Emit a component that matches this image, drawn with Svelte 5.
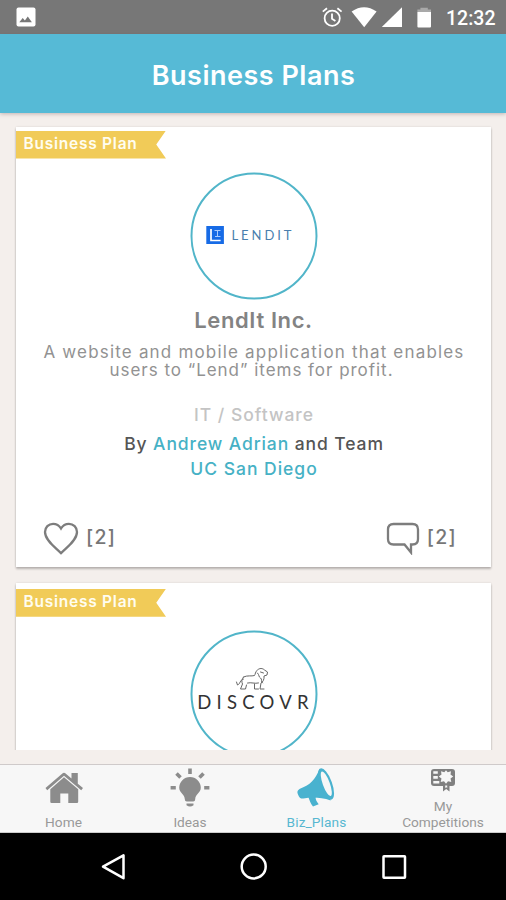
<script>
  const plans = [
    {
      logo: 'lendit',
      name: 'LendIt Inc.',
      lines: ['A website and mobile application that enables', 'users to “Lend” items for profit.'],
      field: 'IT / Software',
      author: 'Andrew Adrian',
      school: 'UC San Diego',
      likes: 2,
      comments: 2
    },
    { logo: 'discovr' }
  ];
</script>

<div class="screen">
  <div class="status">
    <svg class="photo" width="20" height="20" viewBox="0 0 20 20">
      <rect x=".5" y=".5" width="19" height="19" rx="2" fill="#fff" />
      <path d="M3.3 15.3L6.7 11l2.2 2.4 2.9-3.9 4.1 5.8z" fill="#777" />
    </svg>
    <svg width="186" height="34" viewBox="320 0 186 34">
      <g fill="none" stroke="#fff" stroke-width="1.8">
        <circle cx="332.2" cy="18.3" r="7.6" />
        <path d="M332 13.6v5.2l3.4 2.2M322.8 11.6l4.2-3.4M341.6 11.6l-4.2-3.4" />
      </g>
      <path d="M351.6 11.6Q364 2.8 376.6 11.6L364.2 27.2z" fill="#fff" />
      <path d="M402 7.3V27h-20.2z" fill="#fff" />
      <path d="M417.4 12V9.6h3V7.7h7.4v1.9h3.2V12z" fill="#a9a9a9" />
      <path d="M417.4 12H431v14.6q0 1-1 1h-11.600q-1 0-1-1z" fill="#fff" />
      <text class="clock" x="446" y="25" textLength="49.500">12:32</text>
    </svg>
  </div>
  <header><h1>Business Plans</h1></header>

  <main>
    <div class="feed">
      {#each plans as plan}
        <article class={plan.logo}>
          <div class="ribbon"><span>Business Plan</span></div>
          <div class="avatar">
            {#if plan.logo === 'lendit'}
              <svg width="128" height="128" viewBox="0 0 128 128">
                <circle cx="64" cy="64" r="62.500" class="ring" />
                <rect x="16.300" y="54" width="17.600" height="18" fill="#176be6" />
                <path d="M21 57v11.500h9.600" fill="none" stroke="#fff" stroke-width="1.700" />
                <path d="M24.500 58.500h6M27.500 58.500v6M25 64.500h5.500" fill="none" stroke="#a9cbff" stroke-width="1" />
                <text x="41.500" y="68" class="lendtext" textLength="60">LENDIT</text>
              </svg>
            {:else}
              <svg width="128" height="128" viewBox="0 0 128 128">
                <circle cx="64" cy="64" r="62.500" class="ring" />
                <g transform="translate(.5 1)" fill="none" stroke="#666" stroke-width="1" stroke-linejoin="round" stroke-linecap="round">
                  <path d="M53 46c4-2 8-.5 11-1.500 1-1 .5-4 3-5.500 2-2 5-2 7 0l3 2-.500 3-3 1c.5 3-1 6-3 7l-1 6h4M53 46c-2 2-2 5-1 7l-2 5h5l1-4M64 53v5h4M57 52c4-1 7 1 11 0M67 42c2 2 1 4 3 5s0 4 2 5M70 41l3 1M53 48c-4 1-3 5-6 6l-1-3" />
                </g>
                <text x="7.200" y="78.500" class="disctext" textLength="111.500">DISCOVR</text>
              </svg>
            {/if}
          </div>
          {#if plan.name}
            <h2>{plan.name}</h2>
            <p class="desc">
              <span class="l1">{plan.lines[0]}</span>
              <span class="l2">{plan.lines[1]}</span>
            </p>
            <p class="field">{plan.field}</p>
            <p class="by">By <b>{plan.author}</b> and Team</p>
            <p class="school">{plan.school}</p>
            <div class="actions">
              <div class="act">
                <svg width="36" height="33" viewBox="0 0 36 33">
                  <path d="M18 31.200C13 26 2 18.500 2 10 2 5.300 5.600 1.800 10.100 1.800c3.200 0 6.100 1.700 7.900 4.700 1.800-3 4.700-4.700 7.900-4.700C30.400 1.800 34 5.300 34 10c0 8.500-11 16-16 21.200z" />
                </svg>
                <span>[{plan.likes}]</span>
              </div>
              <div class="act">
                <svg width="34" height="33" viewBox="0 0 34 33">
                  <path d="M7.500 2h19q5.500 0 5.500 5.500v9.500q0 5.500-5.500 5.500H25v8l-6.500-8h-11Q2 22.500 2 17V7.500Q2 2 7.500 2z" />
                </svg>
                <span>[{plan.comments}]</span>
              </div>
            </div>
          {/if}
        </article>
      {/each}
    </div>
  </main>

  <nav class="tabs">
    <div class="tab">
      <svg width="40" height="42" viewBox="0 0 40 42" fill="#8c8c8c">
        <path d="M20 12.200l14.200 12v12.600q0 1.200-1.200 1.200h-8.700v-9.500h-8V38H7.500q-1.200 0-1.200-1.200V24.200z" />
        <path d="M1.500 23L18.400 8.400q1.600-1.400 3.200 0l5.900 5V8.100h6.300v10.700L39 23l-1.800 2.200L20 10.800 3.200 25.200z" />
      </svg>
      <span>Home</span>
    </div>
    <div class="tab">
      <svg width="40" height="42" viewBox="0 0 40 42" fill="#8c8c8c">
        <path d="M20 12a10.800 10.800 0 0 1 10.800 10.800c0 4.800-5.600 6.700-5.600 11.400q0 2.300-2 2.300h-6.400q-2 0-2-2.300c0-4.700-5.600-6.600-5.600-11.400A10.800 10.800 0 0 1 20 12z" />
        <path d="M16.500 38.500h7v1.700q-3.500 2.600-7 0z" />
        <path d="M20 3.500v5.500M6.500 8.500l4 4M33.500 8.500l-4 4M.6 22.800h5.200M34.200 22.800h5.200" stroke="#8c8c8c" stroke-width="3.600" />
      </svg>
      <span>Ideas</span>
    </div>
    <div class="tab active">
      <svg width="40" height="42" viewBox="0 0 40 42" fill="#49b2cf">
        <path d="M22.800 3.500C18 15 13 20 3.500 23.500.5 25 0 26.500.800 29l1 2.200c1 2 2.500 2.600 4.700 2.200 9-1.600 17.500-1 27.200 2z" />
        <ellipse cx="29" cy="19" rx="6.100" ry="16.500" transform="rotate(-20 29 19)" />
        <ellipse cx="29.300" cy="18.700" rx="3.500" ry="13" transform="rotate(-20 29.300 18.700)" fill="#f7f7f7" />
        <path d="M11 31h7.700c-.5 3.500 1 5.500 3 8.200l-5.700 2.300c-2.500-3-3.500-6.500-5-10.500z" />
      </svg>
      <span class="biz">Biz_Plans</span>
    </div>
    <div class="tab comps">
      <svg width="26" height="26" viewBox="0 0 26 26">
        <rect x="1" y="2" width="24" height="17" rx="3" fill="#808080" />
        <path d="M3.300 4.300h4.500v2.400H3.300zM3.300 9h4.500v2.700H3.300zM3.300 14h6v2.600h-6z" fill="#f7f7f7" />
        <path d="M16 3.200l1.700 2.100 3.300-1.100-.5 3.200 2.700 2.100-2.700 1.900.8 3.500-3.300-.7-2 2.500-2-2.500-3.300.7.800-3.500-2.700-1.900 2.700-2.100-.5-3.200 3.300 1.100z" fill="#f7f7f7" />
        <path d="M13 16.500l3 1.500 3.500-1.500v8L16.200 22 13 24.500z" fill="#808080" />
        <path d="M15.200 18.500h2v2.600l-1-.8-1 .8z" fill="#f7f7f7" />
      </svg>
      <span>My</span>
      <span>Competitions</span>
    </div>
  </nav>

  <div class="sysnav">
    <svg width="506" height="67" viewBox="0 0 506 67" fill="none" stroke="#fff" stroke-width="2.500" stroke-linejoin="round">
      <path d="M123.500 22.300v22.900L103 33.700z" />
      <circle cx="253.700" cy="33.500" r="12" />
      <rect x="383.500" y="23.300" width="21.500" height="21.500" rx=".5" />
    </svg>
  </div>
</div>

<style>
  :global(body) { margin: 0; }
  .screen {
    width: 506px; height: 900px; overflow: hidden;
    display: flex; flex-direction: column;
    background: #f4efec; font-family: Inter, "Open Sans", sans-serif;
  }
  svg { display: block; flex: none; }
  h1, h2, p { margin: 0; white-space: nowrap; }
  .status {
    height: 34px; flex: none; background: #777;
    display: flex; align-items: center; justify-content: space-between;
  }
  .photo { margin-left: 16px; }
  .clock { font: 500 19.500px Roboto, sans-serif; fill: #fff; }
  header {
    height: 79px; flex: none; background: #56bad6; position: relative;
    box-shadow: 0 1px 4px rgba(120, 90, 90, .4);
    display: flex; justify-content: center;
  }
  h1 { font-size: 27px; font-weight: 600; line-height: 32px; margin: 26px 0 0 1px; letter-spacing: .5px; color: #fff; }
  main { height: 637px; flex: none; overflow: hidden; }
  .feed { padding: 14px 15px 0 16px; display: flex; flex-direction: column; gap: 15.500px; }
  article {
    height: 440px; flex: none; background: #fff; box-sizing: border-box; padding-top: 3.500px;
    box-shadow: 0 2px 2px rgba(100, 95, 95, .4), 0 0 2px rgba(0, 0, 0, .12);
    display: flex; flex-direction: column; align-items: center;
  }
  article.discovr { padding-top: 6.200px; }
  .ribbon {
    align-self: flex-start; width: 150px; height: 28px; background: #f1cb58;
    clip-path: polygon(0 0, 100% 0, 93.500% 50%, 100% 100%, 0 100%);
  }
  .ribbon span {
    display: block; padding-left: 7.500px; font-size: 15.500px; font-weight: 600;
    line-height: 26px; letter-spacing: .750px; color: #fffdf0; white-space: nowrap;
  }
  .avatar { margin-top: 13.500px; }
  .ring { fill: #fff; stroke: #51b5c9; stroke-width: 2; }
  .lendtext { font: 400 13px Lato, sans-serif; fill: #4a7fae; }
  .disctext { font: 400 18.500px Lato, sans-serif; fill: #333; }
  h2 { font-size: 22px; font-weight: 600; line-height: 26px; margin-top: 7px; color: #838383; letter-spacing: .6px; }
  .desc { display: flex; flex-direction: column; align-items: center; margin-top: 10px; font-size: 17px; line-height: 18.300px; color: #929292; }
  .l1 { letter-spacing: 1.180px; margin-left: 1px; }
  .l2 { letter-spacing: .970px; margin-right: 4px; }
  .field { margin-top: 25px; font-size: 17.500px; font-weight: 500; line-height: 20px; color: #c4c4c4; letter-spacing: .980px; margin-left: 1px; }
  .by { margin-top: 9px; font-size: 17.500px; font-weight: 500; line-height: 20px; color: #555; letter-spacing: .900px; margin-left: 1px; }
  b { font-weight: 500; color: #46b1c5; }
  .school { margin-top: 5px; font-size: 17.500px; font-weight: 500; line-height: 20px; color: #46b1c5; letter-spacing: .980px; margin-left: 1px; }
  .actions { margin-top: 43px; align-self: stretch; padding: 0 34px 0 27px; display: flex; justify-content: space-between; }
  .act { display: flex; gap: 7px; font-size: 19.500px; font-weight: 500; line-height: 30px; color: #777; letter-spacing: 1.300px; }
  .act path { fill: none; stroke: #7d7d7d; stroke-width: 2.300; stroke-linejoin: miter; }
  .tabs {
    margin-top: 14px; height: 69px; flex: none; box-sizing: border-box;
    background: #f7f7f7; border-top: 1.500px solid #cfcaca; border-bottom: 1px solid #ccc;
    display: grid; grid-template-columns: 127px 126px 127px 126px;
  }
  .tab {
    display: flex; flex-direction: column; align-items: center;
    font-family: Roboto, sans-serif; font-size: 13.700px; line-height: 16px; color: #999;
  }
  .biz { letter-spacing: .120px; }
  .tab > svg { margin-bottom: 7px; }
  .tab.comps > svg { margin: 2px 0 5px; }
  .active { color: #58b7d1; }
  .sysnav { height: 67px; background: #000; flex: none; }
</style>
